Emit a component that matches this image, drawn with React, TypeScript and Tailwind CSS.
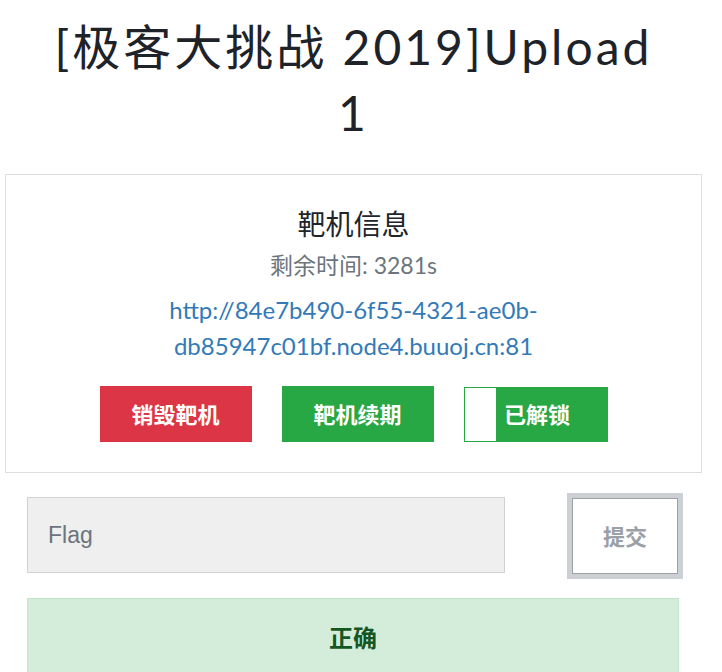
import React from "react";

export default function App() {
  return (
    <div className="w-[707px] bg-white text-[#212529] font-['Lato','Noto_Sans_CJK_SC',sans-serif]">
      <h1 className="mx-auto w-[612px] pt-[14px] text-center text-[48px] font-normal leading-[66px] tracking-[3px] text-[#1e2229] font-['Lato','Noto_Sans_CJK_SC',sans-serif]">
        [极客大挑战 2019]Upload 1
      </h1>

      <div className="mx-[5px] mt-[28px] border border-[#dedede] px-4 pt-[29px] pb-[30px] text-center">
        <h3 className="text-[28px] leading-[40px] font-normal text-[#212529]">靶机信息</h3>
        <div className="mt-[6px] text-[23px] leading-[30px] text-[#6c757d]">剩余时间: 3281s</div>
        <div className="mx-auto mt-[12px] w-[440px] text-[24px] leading-[36px] text-[#337ab7]">
          <a href="#" className="text-[#337ab7]">
            http://84e7b490-6f55-4321-ae0b-db85947c01bf.node4.buuoj.cn:81
          </a>
        </div>
        <div className="mt-[22px] flex items-start justify-center gap-[30px]">
          <button className="flex h-[56px] w-[152px] items-center justify-center bg-[#dc3545] text-[22px] font-bold text-white">
            销毁靶机
          </button>
          <button className="flex h-[56px] w-[152px] items-center justify-center bg-[#28a745] text-[22px] font-bold text-white">
            靶机续期
          </button>
          <div className="mt-[1px] flex h-[55px] w-[144px] border border-[#28a745]">
            <div className="w-[31px] bg-white" />
            <div className="flex flex-1 items-center justify-center bg-[#28a745] pr-[28px] text-[22px] font-bold text-white">
              已解锁
            </div>
          </div>
        </div>
      </div>

      <div className="ml-[27px] mt-[23px] flex items-center">
        <div className="flex h-[76px] w-[478px] items-center border border-[#d2d2d2] bg-[#efefef] pl-[20px] text-[23px] text-[#6c757d] font-['Liberation_Sans',Arial,sans-serif]">
          Flag
        </div>
        <button className="ml-[67px] mt-[2px] flex h-[76px] w-[106px] items-center justify-center border border-[#9da1a6] bg-white text-[22px] font-bold text-[#9aa0a6] shadow-[0_0_0_5px_#ccd0d4]">
          提交
        </button>
      </div>

      <div className="ml-[27px] mt-[24px] flex h-[80px] w-[652px] items-center justify-center border border-[#c3e6cb] bg-[#d4edda] text-[24px] font-bold text-[#155724]">
        正确
      </div>
    </div>
  );
}
